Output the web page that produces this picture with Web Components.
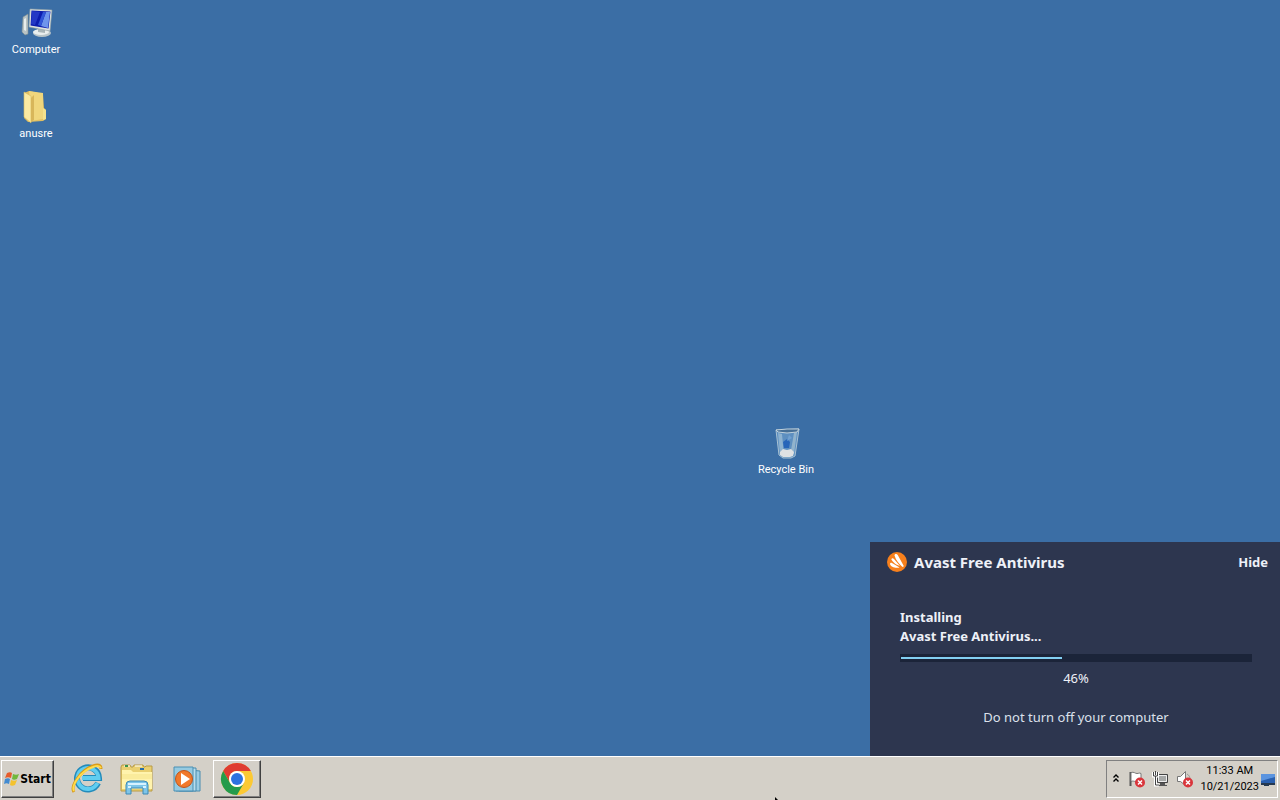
<!DOCTYPE html>
<html lang="en">
<head>
<meta charset="utf-8">
<title>Desktop</title>
<style>
  html, body { height: 100%; margin: 0; }
  body {
    overflow: hidden;
    background: #3b6ea5;
    font: 11px/16px Roboto, "Liberation Sans", sans-serif;
  }
</style>
</head>
<body>
<desktop-shell>
  <desktop-icon label="Computer" style="--x: 0px; --y: 6px">
    <svg width="34" height="34" viewBox="0 0 34 34">
      <path d="M4 11l5-3v20l-3 1-3-3z" fill="#b9c3c5" stroke="#7e8d91" stroke-width=".6"/>
      <path d="M5 13l2-1v13l-2-1z" fill="#e8edec"/>
      <ellipse cx="23" cy="27" rx="9" ry="4" fill="#b8c4c8"/>
      <ellipse cx="22" cy="26" rx="8" ry="3" fill="#e9eeee"/>
      <path d="M19 21l7 2v4l-7-1z" fill="#a9b5b8"/>
      <path d="M11 3l22 1-2 21-21-4z" fill="#dfe4df" stroke="#8d9da5" stroke-width=".6"/>
      <path d="M12.500 4.500l19 1-2 17-18-3z" fill="#0c1cae"/>
      <path d="M13 5l8 1-5 13-4-1z" fill="#2438c5"/>
      <path d="M27 6l4 0-2 16-7-2z" fill="#6f95ec"/>
      <path d="M24 6l3 0-5 14-3-1z" fill="#3156d8"/>
    </svg>
  </desktop-icon>
  <desktop-icon label="anusre" style="--x: 0px; --y: 90px">
    <svg width="34" height="34" viewBox="0 0 34 34">
      <path d="M5 3l5-2 14 3 1 14 2 2v9l-3 2-15 1-4-4z" fill="#e2bf61"/>
      <path d="M10 1l14 2 0 26-12 2z" fill="#f0d67c"/>
      <path d="M5 2l7 4v27l-7-6z" fill="#fbeaa2" stroke="#d5b95e" stroke-width=".6"/>
      <path d="M12 8l3-3v25l-3 2z" fill="#d8b65a"/>
      <path d="M24 18l3 2v9l-3 1z" fill="#f5e28e"/>
    </svg>
  </desktop-icon>
  <desktop-icon label="Recycle Bin" style="--x: 750px; --y: 426px">
    <svg width="34" height="34" viewBox="0 0 34 34">
      <path d="M7 4l23-1-4 27-4 2h-8l-4-3z" fill="#5d8fc0" stroke="#a9c2d3"/>
      <path d="M9 7l4 1 2 22-4-2z" fill="#8db2d0"/>
      <path d="M25 7l3-1-3 22-4 2z" fill="#91b3cc"/>
      <path d="M14 16l4-3 3 3-1 6h-5z" fill="#2765b9"/>
      <path d="M20 9l3 3-5 3z" fill="#70a0d1"/>
      <path d="M11 26l3-3 4 1 4-1 3 3-1 4-3 1h-7l-3-2z" fill="#e0e2e3"/>
      <path d="M7 4l11-1 12 0-2 3-10 1-9-1z" fill="#466f96" stroke="#c0d0da"/>
    </svg>
  </desktop-icon>
  <install-popup slot="popup" heading="Avast Free Antivirus" percent="46"></install-popup>
  <task-bar slot="taskbar"></task-bar>
</desktop-shell>

<script>
class DesktopShell extends HTMLElement {
  constructor() {
    super();
    this.attachShadow({ mode: 'open' }).innerHTML = `
      <style>
        :host { display: flex; flex-direction: column; height: 100vh; background: #3b6ea5; }
        main { flex: 1; position: relative; min-height: 0; }
        .cursor { position: absolute; left: 774px; bottom: 0; width: 4px; height: 3px; pointer-events: none; }
      </style>
      <main>
        <slot></slot>
        <slot name="popup"></slot>
      </main>
      <slot name="taskbar"></slot>
      <svg class="cursor" viewBox="0 0 4 3"><path d="M1 0l3 3H1z"/></svg>
    `;
  }
}

class DesktopIcon extends HTMLElement {
  constructor() {
    super();
    this.attachShadow({ mode: 'open' });
  }

  connectedCallback() {
    this.shadowRoot.innerHTML = `
      <style>
        :host { display: block; position: absolute; left: var(--x); top: var(--y); width: 72px; }
        a {
          display: flex;
          flex-direction: column;
          align-items: center;
          gap: 2px;
          color: #fff;
          text-decoration: none;
          cursor: default;
        }
      </style>
      <a href="#"><slot></slot><span>${this.getAttribute('label')}</span></a>
    `;
  }
}

class InstallPopup extends HTMLElement {
  constructor() {
    super();
    this.attachShadow({ mode: 'open' });
  }

  connectedCallback() {
    const heading = this.getAttribute('heading');
    const percent = this.getAttribute('percent');

    this.shadowRoot.innerHTML = `
      <style>
        :host {
          display: block;
          position: absolute;
          right: 0;
          bottom: 0;
          box-sizing: border-box;
          width: 410px;
          background: #2d364f;
          color: #eef1f8;
          font: 13px/19px "Noto Sans", "Open Sans", sans-serif;
        }
        header { display: flex; align-items: center; gap: 6px; padding: 8px 12px 8px 16px; }
        h1 { flex: 1; margin: 0; font-size: 15px; line-height: 24px; }
        button { padding: 0; border: 0; background: none; color: inherit; font: inherit; font-weight: 700; }
        section { padding: 26px 28px 29px 30px; }
        p { margin: 0; text-align: center; }
        label { display: block; font-weight: 700; }
        .track { height: 8px; margin: 8px 0 7px; box-sizing: border-box; padding: 3px 1px; background: #1b2439; }
        .fill { height: 2px; width: ${percent}%; background: #82cff2; }
        .percent { margin-bottom: 20px; }
        .note { color: #dce1ec; }
      </style>
      <header>
        <svg width="22" height="22" viewBox="0 0 22 22">
          <circle cx="11" cy="11" r="10" fill="#f7801c"/>
          <path d="M8.500 4.500c0-2 2.500-2 3.500 0l5.500 10c.5 1-.5 2-1.500 1-3-3-6-6-7.500-11z" fill="#fff"/>
          <path d="M5.500 8.500c0-1.500 1.500-1.500 2.500-.5l6 7c-3-1-7-3-8.500-6.500z" fill="#fff"/>
          <path d="M4 13c0-1 1-1.500 2-1l7.500 4.500c-4 1-9-.5-9.500-3.500z" fill="#fff"/>
        </svg>
        <h1>${heading}</h1>
        <button type="button">Hide</button>
      </header>
      <section>
        <label id="task">Installing<br>${heading}...</label>
        <div class="track" role="progressbar" aria-labelledby="task" aria-valuenow="${percent}"><div class="fill"></div></div>
        <p class="percent">${percent}%</p>
        <p class="note">Do not turn off your computer</p>
      </section>
    `;
  }
}

class TaskButton extends HTMLElement {
  constructor() {
    super();
    this.attachShadow({ mode: 'open' });
  }

  connectedCallback() {
    this.shadowRoot.innerHTML = `
      <style>
        :host { display: flex; width: 48px; }
        button {
          display: flex;
          flex: 1;
          align-items: center;
          justify-content: center;
          padding: 0;
          border: 1px solid transparent;
          background: none;
          color: #000;
          font: inherit;
        }
        :host([raised]) button {
          border-color: #fff #404040 #404040 #fff;
          box-shadow: inset -1px -1px #808080;
          background: #d4d0c8;
        }
        :host([start]) { width: 53px; }
        :host([start]) button { font: bold 12px/16px "DejaVu Sans Condensed", "DejaVu Sans", sans-serif; }
      </style>
      <button type="button" aria-label="${this.getAttribute('label')}"><slot></slot></button>
    `;
  }
}

class SystemTray extends HTMLElement {
  constructor() {
    super();
    this.attachShadow({ mode: 'open' }).innerHTML = `
      <style>
        :host {
          display: flex;
          align-items: center;
          box-sizing: border-box;
          width: 172px;
          padding: 0 1px 0 4px;
          border: 1px solid;
          border-color: #808080 #fff #fff #808080;
        }
        .icons { display: flex; flex: 1; align-items: center; gap: 7px; }
        time { padding-right: 1px; text-align: center; }
      </style>
      <div class="icons">
        <svg width="10" height="16" viewBox="0 0 10 16" fill="none" stroke="#000" stroke-width="1.4">
          <path d="M2.500 6.500l2.500-2.500 2.500 2.500M2.500 10.500l2.500-2.500 2.500 2.500"/>
        </svg>
        <svg width="17" height="18" viewBox="0 0 17 18">
          <path d="M2.500 2v14" stroke="#555" stroke-width="2"/>
          <path d="M3 2.500c3-1 4 1 6 1s2-1 4 0v7c-2-1-3 1-5 1s-3-1-5 0z" fill="#fff" stroke="#777"/>
          <circle cx="12" cy="12.500" r="5" fill="#d9353b"/>
          <path d="M10 10.500l4 4m0-4l-4 4" stroke="#fff" stroke-width="1.500"/>
        </svg>
        <svg width="17" height="18" viewBox="0 0 17 18">
          <path d="M5.500 4.500h10v8h-10z" fill="#a6a8a7" stroke="#444"/>
          <path d="M6.500 5.500h8v6h-8z" fill="none" stroke="#eee"/>
          <path d="M8 13h5v2h2v1H6v-1h2z" fill="#555"/>
          <path d="M1.500 2v4h4V2M3.500 6v9H7" fill="none" stroke="#fff" stroke-width="3"/>
          <path d="M1.500 2v4h4V2M3.500 1v4M3.500 6v9H7" fill="none" stroke="#444"/>
        </svg>
        <svg width="17" height="18" viewBox="0 0 17 18">
          <path d="M1.500 6.500h3l5-5v14l-5-4h-3z" fill="#fff" stroke="#777"/>
          <path d="M11 4c2 1 3 3 3 5" fill="none" stroke="#999"/>
          <circle cx="12" cy="12.500" r="5" fill="#d9353b"/>
          <path d="M10 10.500l4 4m0-4l-4 4" stroke="#fff" stroke-width="1.500"/>
        </svg>
      </div>
      <time datetime="2023-10-21T11:33">11:33 AM<br>10/21/2023</time>
      <svg width="16" height="16" viewBox="0 0 16 16">
        <path d="M1 3h14v10H1z" fill="#285faf"/>
        <path d="M1 3h14v3L1 10z" fill="#5b94df"/>
        <path d="M1 12h14v2H9v1H4v-1H1z" fill="#253950"/>
      </svg>
    `;
  }
}

class TaskBar extends HTMLElement {
  constructor() {
    super();
    this.attachShadow({ mode: 'open' }).innerHTML = `
      <style>
        :host {
          display: flex;
          box-sizing: border-box;
          height: 44px;
          padding: 3px 2px 2px 1px;
          border-top: 1px solid #fff;
          background: #d4d0c8;
          color: #000;
        }
        nav { display: flex; flex: 1; gap: 2px; padding-left: 9px; }
      </style>
      <task-button start raised label="Start">
        <svg width="16" height="16" viewBox="0 0 16 16">
          <path d="M3 2c2-1 4-1 5 0L7 7C5 6 3 6 1 7z" fill="#e65c2c"/>
          <path d="M9 3c2 1 4 1 6 0l-2 5c-2 1-4 1-5 0z" fill="#71b83c"/>
          <path d="M1 8c2-1 4-1 5 0l-1 5c-2-1-3-1-5 0z" fill="#438bd1"/>
          <path d="M7 9c2 1 4 1 6 0l-2 5c-2 1-4 1-5 0z" fill="#f4c22d"/>
        </svg>
        <span>Start</span>
      </task-button>
      <nav>
        <task-button label="Internet Explorer">
          <svg width="32" height="32" viewBox="0 0 32 32">
            <path d="M27 20A11 11 0 1 1 28 15H12" fill="none" stroke="#238bbb" stroke-width="6"/>
            <path d="M26.500 20A10.500 10.500 0 1 1 27.500 15H11" fill="none" stroke="#60cdf0" stroke-width="4"/>
            <path d="M3 29C-1 23 10 7 22 3c5-2 8-1 8 3" fill="none" stroke="#d99b19" stroke-width="3"/>
            <path d="M3 28C0 22 10 8 22 4c5-2 7-1 8 1" fill="none" stroke="#ffdb4b" stroke-width="2"/>
          </svg>
        </task-button>
        <task-button label="Windows Explorer">
          <svg width="34" height="34" viewBox="0 0 34 34">
            <path d="M1 5l1-2h8l1 2h2l1-2h9l1 2h1l1-1h6v25H1z" fill="#e9cf70" stroke="#b89b46"/>
            <path d="M2 8h9l2 2h19v17H2z" fill="#fff3ad"/>
            <path d="M4 4h6M15 4h7" stroke="#fff"/>
            <path d="M5 4h3" stroke="#39934b" stroke-width="2"/>
            <path d="M20 7h4" stroke="#286ca8" stroke-width="2"/>
            <path d="M2 12h30v5H2z" fill="#faeb9b"/>
            <path d="M6 32v-9q0-4 4-4h14q4 0 4 4v9h-5v-6H11v6z" fill="#7ec5e8" stroke="#3c89b6"/>
            <path d="M8 22h18M8 25h3m12 0h3" stroke="#d7f2ff" stroke-width="2"/>
          </svg>
        </task-button>
        <task-button label="Windows Media Player">
          <svg width="30" height="30" viewBox="0 0 30 30">
            <path d="M7 5l21 2v20H7z" fill="#9bcce3" stroke="#498caf"/>
            <path d="M4 4h20v23H4z" fill="#b9dded" stroke="#498caf"/>
            <path d="M2 3h19v24H2z" fill="#95cae1" stroke="#4b90b4"/>
            <circle cx="12" cy="15" r="8.500" fill="#f1792b" stroke="#bf551d"/>
            <path d="M9 9l9 6-9 6z" fill="#fff"/>
          </svg>
        </task-button>
        <task-button raised label="Google Chrome">
          <svg width="34" height="34" viewBox="0 0 34 34">
            <circle cx="17" cy="17" r="16" fill="#fcc934"/>
            <path d="M3.140 9A16 16 0 0 1 30.860 9H17a8 8 0 0 0-6.930 12z" fill="#df3c31"/>
            <path d="M3.140 9A16 16 0 0 0 17 33l6.930-12A8 8 0 0 1 10.070 21z" fill="#249b4b"/>
            <circle cx="17" cy="17" r="8" fill="#fff"/>
            <circle cx="17" cy="17" r="6" fill="#2d72df"/>
          </svg>
        </task-button>
      </nav>
      <system-tray></system-tray>
    `;
  }
}

customElements.define('task-button', TaskButton);
customElements.define('system-tray', SystemTray);
customElements.define('task-bar', TaskBar);
customElements.define('install-popup', InstallPopup);
customElements.define('desktop-icon', DesktopIcon);
customElements.define('desktop-shell', DesktopShell);
</script>
</body>
</html>
